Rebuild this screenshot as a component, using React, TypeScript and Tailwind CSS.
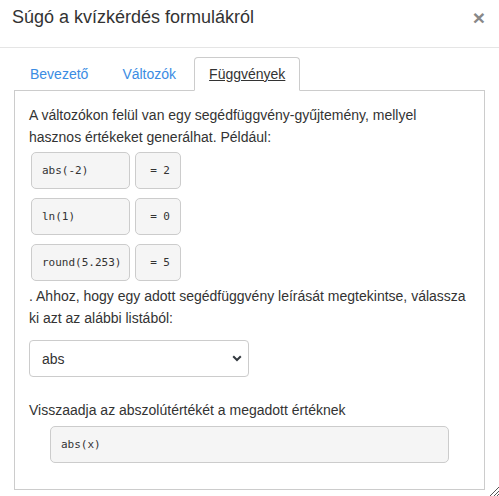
import React from "react";

const examples = [
  { expr: "abs(-2)", result: "= 2" },
  { expr: "ln(1)", result: "= 0" },
  { expr: "round(5.253)", result: "= 5" },
];

const tabs = ["Bevezető", "Változók", "Függvények"];

export default function App() {
  const active = 2;
  return (
    <div className="relative h-[496px] w-[499px] overflow-hidden bg-white text-[#333] font-['Liberation_Sans',Arial,sans-serif]">
      <header className="flex h-[48px] items-start justify-between border-b border-[#e5e5e5] pl-[12px] pr-[14px]">
        <h1 className="mt-[5px] text-[18px] leading-[24px] text-[#333]">Súgó a kvízkérdés formulákról</h1>
        <button className="mt-[7px] text-[21px] font-bold leading-[21px] text-[#888]">×</button>
      </header>

      <div className="px-[14px] pt-[9px]">
        <ul className="flex text-[14px] leading-[20px]">
          {tabs.map((t, i) => (
            <li key={t} className="mr-[2px] -mb-px">
              <a
                href="#"
                className={
                  i === active
                    ? "block rounded-t-[4px] border border-[#ccc] border-b-white bg-white px-[14px] py-[6px] text-[#333] underline"
                    : "block border border-transparent px-[15px] py-[6px] text-[#3b8ce3]"
                }
              >
                {t}
              </a>
            </li>
          ))}
        </ul>

        <div className="h-[400px] border border-[#ccc] px-[14px] pt-[13px] text-[14px] leading-[22px]">
          <p>A változókon felül van egy segédfüggvény-gyűjtemény, mellyel hasznos értékeket generálhat. Például:</p>

          <div className="mt-[4px] flex flex-col gap-[9px] pl-[2px]">
            {examples.map((e) => (
              <div key={e.expr} className="flex gap-[5px] font-['DejaVu_Sans_Mono',monospace] text-[11px] text-[#333]">
                <div className="flex h-[37px] w-[99px] items-center rounded-[5px] border border-[#ccc] bg-[#f5f5f5] px-[10px]">
                  {e.expr}
                </div>
                <div className="flex h-[37px] w-[46px] items-center justify-end rounded-[5px] border border-[#ccc] bg-[#f5f5f5] pr-[10px]">
                  {e.result}
                </div>
              </div>
            ))}
          </div>

          <p className="mt-[4px]">. Ahhoz, hogy egy adott segédfüggvény leírását megtekintse, válassza ki azt az alábbi listából:</p>

          <div className="relative mt-[11px] w-[220px]">
            <select className="h-[37px] w-full appearance-none rounded-[4px] border border-[#ccc] bg-white pl-[12px] text-[14px] text-[#333]">
              <option>abs</option>
              <option>ln</option>
              <option>round</option>
            </select>
            <svg className="pointer-events-none absolute right-[7px] top-[15px]" width="10" height="7" viewBox="0 0 10 7">
              <path d="M1.2 1.2 L5 5 L8.8 1.2" fill="none" stroke="#343a40" strokeWidth="2" />
            </svg>
          </div>

          <p className="mt-[22px]">Visszaadja az abszolútértékét a megadott értéknek</p>

          <div className="ml-[21px] mt-[5px] flex h-[37px] w-[399px] items-center rounded-[5px] border border-[#ccc] bg-[#f5f5f5] px-[10px] font-['DejaVu_Sans_Mono',monospace] text-[11px]">
            abs(x)
          </div>
        </div>
      </div>

      <svg className="absolute bottom-0 right-0" width="10" height="10" viewBox="0 0 10 10">
        <path d="M1 10 L10 1 M5 10 L10 5 M8 10 L10 8" stroke="#555" strokeWidth="1" />
      </svg>
    </div>
  );
}
